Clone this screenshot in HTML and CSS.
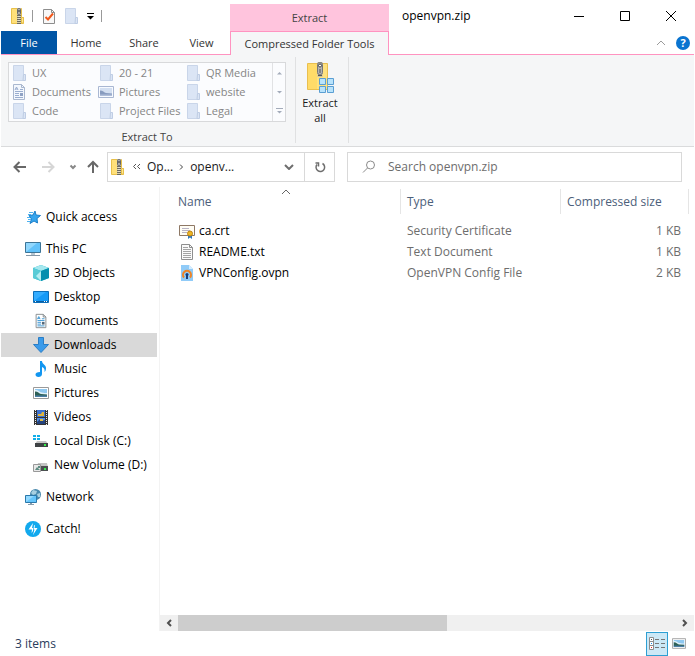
FILE: index.html
```html
<!DOCTYPE html>
<html lang="en">
<head>
    <meta charset="UTF-8">
    <meta name="viewport" content="width=device-width, initial-scale=1.0">
    <title>openvpn.zip</title>
    <link rel="stylesheet" href="styles.css">
</head>
<body>
    <!-- Shared icons -->
    <svg class="sprite" aria-hidden="true">
        <symbol id="zip" viewBox="0 0 16 18">
            <path d="M1.5 1.500h10v9h2v6h-12z" fill="#ffe07a" stroke="#e8c04a"/>
            <path d="M11.500 16v-5.500h2V16z" fill="#ffe791" stroke="#e8c04a"/>
            <path d="M7 1h4v16H7z" fill="#d5cda8"/>
            <path d="M9 8v9" stroke="#6d6a60" stroke-width="4" stroke-dasharray="1 1"/>
            <path d="M8.500 9.500h1M8.500 11.500h1M8.500 13.500h1" stroke="#eee"/>
            <rect x="7.500" y="1.500" width="3" height="6" rx="1" fill="#aaa" stroke="#65676a"/>
            <path d="M9 3v2" stroke="#333"/>
        </symbol>
        <symbol id="folder" viewBox="0 0 14 18">
            <path d="M1.500 1.500h10v15h-10z" fill="#dbe5f5" stroke="#c9d5e9"/>
            <path d="M11.500 10.500h2v6h-2.500z" fill="#dbe5f5" stroke="#bfcde4"/>
        </symbol>
        <symbol id="document" viewBox="0 0 14 18">
            <path d="M1.500 1.500h8l3 3v12h-11z" fill="#fff" stroke="#7f8589"/>
            <path d="M9.500 1.500v3h3" fill="none" stroke="#7f8589"/>
            <path d="M3 7l1.500-3L6 7M3.500 6h2M8 6.500h3M3 8.500h8M3 10.500h4M3 12.500h4M3 14.500h8" fill="none" stroke="#2f8fd0"/>
            <path d="M8 10h3v3H8z" fill="#52677a"/>
        </symbol>
        <symbol id="document-off" viewBox="0 0 14 18">
            <path d="M1.500 1.500h8l3 3v12h-11z" fill="#f3f7fd" stroke="#a9b7cf"/>
            <path d="M9.500 1.500v3h3" fill="none" stroke="#a9b7cf"/>
            <path d="M3 7l1.500-3L6 7M3.500 6h2M8 6.500h3M3 8.500h8M3 10.500h4M3 12.500h4M3 14.500h8" fill="none" stroke="#9aadcf"/>
            <path d="M8 10h3v3H8z" fill="#8fa2c4"/>
        </symbol>
        <symbol id="picture" viewBox="0 0 16 12">
            <path d="M.5.5h15v11H.5z" fill="#fff" stroke="#9a9a9a"/>
            <path d="M2 2h12v8H2z" fill="#8fc8f0"/>
            <path d="M2 3c4 0 4 2 7 2.500 2 .5 3 .5 5 .5v2H2z" fill="#dff0fa"/>
            <path d="M2 4.500c3 0 4 2 6 2.500l6 .5V9H2z" fill="#2d5f55"/>
            <path d="M2 8.500h12V10H2z" fill="#4b7ea6"/>
        </symbol>
        <symbol id="picture-off" viewBox="0 0 16 12">
            <path d="M.5.5h15v11H.5z" fill="#f7faff" stroke="#a9b7d2"/>
            <path d="M2 2h12v8H2z" fill="#d3dff1"/>
            <path d="M2 4.500c3 0 4 2 6 2.500l6 .5V9H2z" fill="#879bbf"/>
            <path d="M2 8.500h12V10H2z" fill="#aebdd9"/>
        </symbol>
    </svg>

    <div class="window">
        <header class="titlebar">
            <div class="quick-bar">
                <svg class="icon-file" aria-hidden="true"><use href="#zip"/></svg>
                <span class="divider"></span>
                <button type="button" aria-label="Properties">
                    <svg width="14" height="18" viewBox="0 0 14 18"><path d="M1.500 2.500h8l3 3v11h-11z" fill="#f8f8f8" stroke="#8d8d8d"/><path d="M9.500 2.500v3h3" fill="none" stroke="#8d8d8d"/><path d="M3.500 10l2.500 2.500 5-6" fill="none" stroke="#f0581c" stroke-width="2"/></svg>
                </button>
                <button type="button" aria-label="New folder">
                    <svg width="14" height="18"><use href="#folder"/></svg>
                </button>
                <button type="button" aria-label="Customize toolbar">
                    <svg width="9" height="8" viewBox="0 0 9 8"><path d="M1 1.500h7" stroke="#000"/><path d="M1 4h7L4.500 7.500z"/></svg>
                </button>
                <span class="divider"></span>
            </div>
            <div class="context-title">Extract</div>
            <h1>openvpn.zip</h1>
            <div class="window-buttons">
                <button type="button" aria-label="Minimize"><svg width="12" height="12" viewBox="0 0 12 12"><path d="M1 6.500h10" stroke="#000"/></svg></button>
                <button type="button" aria-label="Maximize"><svg width="12" height="12" viewBox="0 0 12 12"><path d="M1.500 1.500h9v9h-9z" fill="none" stroke="#000"/></svg></button>
                <button type="button" aria-label="Close"><svg width="12" height="12" viewBox="0 0 12 12"><path d="M1 1l10 10M11 1L1 11" stroke="#000"/></svg></button>
            </div>
        </header>

        <nav class="tabs">
            <button type="button" class="tab tab-file">File</button>
            <button type="button" class="tab">Home</button>
            <button type="button" class="tab">Share</button>
            <button type="button" class="tab tab-view">View</button>
            <button type="button" class="tab tab-active">Compressed Folder Tools</button>
            <div class="tab-tools">
                <button type="button" aria-label="Collapse ribbon"><svg width="10" height="6" viewBox="0 0 10 6"><path d="M1 5l4-4 4 4" fill="none" stroke="#9b9b9b"/></svg></button>
                <button type="button" class="help" aria-label="Help">?</button>
            </div>
        </nav>

        <section class="ribbon">
            <div class="ribbon-group">
                <div class="gallery">
                    <div class="gallery-items">
                        <button type="button" disabled><svg class="icon-file"><use href="#folder"/></svg>UX</button>
                        <button type="button" disabled><svg class="icon-file"><use href="#folder"/></svg>20 - 21</button>
                        <button type="button" disabled><svg class="icon-file"><use href="#folder"/></svg>QR Media</button>
                        <button type="button" disabled><svg class="icon-file"><use href="#document-off"/></svg>Documents</button>
                        <button type="button" disabled><svg class="icon-file"><use href="#picture-off"/></svg>Pictures</button>
                        <button type="button" disabled><svg class="icon-file"><use href="#folder"/></svg>website</button>
                        <button type="button" disabled><svg class="icon-file"><use href="#folder"/></svg>Code</button>
                        <button type="button" disabled><svg class="icon-file"><use href="#folder"/></svg>Project Files</button>
                        <button type="button" disabled><svg class="icon-file"><use href="#folder"/></svg>Legal</button>
                    </div>
                    <div class="gallery-scroll">
                        <button type="button" aria-label="Previous row" disabled><svg width="7" height="8" viewBox="0 0 7 8"><path d="M1 5.500h5L3.500 3z" fill="#a3abba"/></svg></button>
                        <button type="button" aria-label="Next row" disabled><svg width="7" height="8" viewBox="0 0 7 8"><path d="M1 3h5L3.500 5.500z" fill="#a3abba"/></svg></button>
                        <button type="button" aria-label="More" disabled><svg width="7" height="8" viewBox="0 0 7 8"><path d="M0 1.500h7" stroke="#a3abba"/><path d="M1 4h5L3.500 6.500z" fill="#a3abba"/></svg></button>
                    </div>
                </div>
                <div class="group-label">Extract To</div>
            </div>
            <div class="ribbon-group ribbon-group-small">
                <button type="button" class="extract-all">
                    <svg width="32" height="32" viewBox="0 0 32 32" aria-hidden="true">
                        <path d="M3.500 2.500h20v26h-20z" fill="#ffe27f" stroke="#e9bf4f"/>
                        <path d="M4 3h9v25H4z" fill="#ffdb68"/>
                        <path d="M13.500 1h5v15h-5z" fill="#c9c1a4"/>
                        <rect x="13.500" y="1.500" width="5" height="12" rx="2" fill="#b2b2b2" stroke="#777"/>
                        <circle cx="16" cy="4.500" r="1.500" fill="#fff" stroke="#444"/>
                        <path d="M16 8v4M14 14.500h4" stroke="#555"/>
                        <g fill="#b9e3fb" stroke="#5b9fd3"><path d="M15.500 17.500h6v6h-6zM23.500 17.500h6v6h-6zM15.500 25.500h6v6h-6zM23.500 25.500h6v6h-6z"/></g>
                    </svg>
                    <span>Extract<br>all</span>
                </button>
            </div>
        </section>

        <div class="navbar">
            <div class="history">
                <button type="button" aria-label="Back"><svg width="14" height="12" viewBox="0 0 14 12"><path d="M13 6H2M6.500 1L1.500 6l5 5" fill="none" stroke="#686868" stroke-width="2"/></svg></button>
                <button type="button" aria-label="Forward" disabled><svg width="14" height="12" viewBox="0 0 14 12"><path d="M1 6h11M7.500 1l5 5-5 5" fill="none" stroke="#d6d6d6" stroke-width="2"/></svg></button>
                <button type="button" aria-label="Recent locations"><svg width="8" height="6" viewBox="0 0 8 6"><path d="M1.500 1.500L4 4l2.500-2.500" fill="none" stroke="#888" stroke-width="2"/></svg></button>
                <button type="button" aria-label="Up"><svg width="12" height="14" viewBox="0 0 12 14"><path d="M6 13V2M1 7l5-5 5 5" fill="none" stroke="#686868" stroke-width="2"/></svg></button>
            </div>
            <div class="address">
                <svg class="icon-file" aria-hidden="true"><use href="#zip"/></svg>
                <svg width="9" height="8" viewBox="0 0 9 8"><path d="M4 1L1.500 3.500 4 6M8 1L5.500 3.500 8 6" fill="none" stroke="#555"/></svg>
                <button type="button">Op...</button>
                <svg width="5" height="8" viewBox="0 0 5 8"><path d="M1 1.500L3.500 4 1 6.500" fill="none" stroke="#444"/></svg>
                <button type="button">openv...</button>
                <button type="button" class="address-drop" aria-label="Previous locations"><svg width="10" height="6" viewBox="0 0 10 6"><path d="M1 1l4 4 4-4" fill="none" stroke="#6e6e6e" stroke-width="2"/></svg></button>
                <button type="button" class="refresh" aria-label="Refresh"><svg width="12" height="12" viewBox="0 0 12 12"><path d="M8.500 2.500A4.300 4.300 0 1 1 3 3.500M1.500 2h3v3.500" fill="none" stroke="#6e6e6e" stroke-width="1.500"/></svg></button>
            </div>
            <label class="search">
                <svg width="14" height="14" viewBox="0 0 14 14" aria-hidden="true"><circle cx="8.500" cy="5" r="4" fill="none" stroke="#8b8b8b"/><path d="M5.500 8L1 12.500" stroke="#8b8b8b"/></svg>
                <input type="search" placeholder="Search openvpn.zip" aria-label="Search openvpn.zip">
            </label>
        </div>

        <div class="content">
            <nav class="sidebar">
                <a href="#quick">
                    <svg class="icon" viewBox="0 0 16 16"><path d="M10 2l1 4 4.500.5-3.500 3 .5 4.500-3.500-2-4 2.500 1.500-4.500L4 6.500l4-.5z" fill="#35a5ee" stroke="#1b7fc9"/><path d="M4 3.500h4M3 5.500h3M2 8.500h3M3 10.500h3M2 12.500h3" stroke="#4db2f0"/></svg>Quick access
                </a>
                <div class="sidebar-group">
                    <a href="#pc">
                        <svg class="icon" viewBox="0 0 16 16"><path d="M.5 1.500h15v10H.5z" fill="#62c2fa" stroke="#3c7496"/><path d="M1 11V2h11z" fill="#91d7fd"/><path d="M6 12h4v2H6z" fill="#b8c7d2"/><path d="M1 14.500h14" stroke="#8597a6"/></svg>This PC
                    </a>
                    <a href="#objects" class="child">
                        <svg class="icon" viewBox="0 0 16 16"><path d="M0 3l8-3 8 3v10l-8 3-8-3z" fill="#18b3c9"/><path d="M0 3l8-3 8 3-8 3z" fill="#a6e8ef"/><path d="M0 3l8 3v10l-8-3z" fill="#58cbd6"/><path d="M8 6l8-3v10l-8 3z" fill="#078fae"/><path d="M8 6v10L3 11z" fill="#b5eef1"/></svg>3D Objects
                    </a>
                    <a href="#desktop" class="child">
                        <svg class="icon" viewBox="0 0 16 16"><path d="M.5 2.500h15v11H.5z" fill="#169af7" stroke="#0c6fba"/><path d="M1 12V3h12z" fill="#35adff"/><path d="M1 12.500h14" stroke="#0b5d9f"/><path d="M2 12.500h1M11 12.500h1M13 12.500h1" stroke="#fff"/></svg>Desktop
                    </a>
                    <a href="#documents" class="child"><svg class="icon"><use href="#document"/></svg>Documents</a>
                    <a href="#downloads" class="child selected">
                        <svg class="icon" viewBox="0 0 16 16"><path d="M5.500.5h5v7h5L8 15.500.5 7.500h5z" fill="#3b9bea" stroke="#2b7dc5"/></svg>Downloads
                    </a>
                    <a href="#music" class="child">
                        <svg class="icon" viewBox="0 0 16 16"><path d="M7 0h2c0 3 4 4 4 7 0 2-.5 3-1.500 4 .5-3-.5-4-2.500-5v7c0 2-1.500 3-3.500 3S2.500 15 2.500 13.500 4 11 7 11z" fill="#1296f0"/></svg>Music
                    </a>
                    <a href="#pictures" class="child"><svg class="icon"><use href="#picture"/></svg>Pictures</a>
                    <a href="#videos" class="child">
                        <svg class="icon" viewBox="0 0 16 16"><path d="M1 1h14v15H1z" fill="#343434"/><path d="M4 1h8v7H4z" fill="#3d72cf"/><path d="M4 9h8v6H4z" fill="#4e8ce5"/><path d="M2.500 1v15M13.500 1v15" stroke="#eee" stroke-dasharray="1 1"/><path d="M5 5h3l1-2h2v4H5z" fill="#dfb43c"/><path d="M4 13l3-3 2 2 3-1v4H4z" fill="#24437d"/><path d="M7 10h3v2H7z" fill="#e2bd44"/></svg>Videos
                    </a>
                    <a href="#c" class="child">
                        <svg class="icon" viewBox="0 0 16 16"><path d="M0 2h3v2H0zM4 2h3v2H4zM0 5h3v2H0zM4 5h3v2H4z" fill="#11aee9"/><path d="M4 8h9l2 3H2z" fill="#c4c4c4"/><path d="M2 10h13v4H2z" fill="#3f4345"/><path d="M11 12h2" stroke="#37ef4d" stroke-width="2"/></svg>Local Disk (C:)
                    </a>
                    <a href="#d" class="child">
                        <svg class="icon" viewBox="0 0 16 16"><path d="M5 6h9l1 4H4z" fill="#c4c4c4"/><path d="M6 9h9v5H6z" fill="#4b4f50"/><path d="M11 12h2" stroke="#37ef4d" stroke-width="2"/><path d="M.5 7.500h7v7h-7z" fill="#e8e8e8" stroke="#999"/><path d="M2 13l2-3 3 3zM5 9h2v2H5z" fill="#5f8d83"/></svg>New Volume (D:)
                    </a>
                </div>
                <a href="#network">
                    <svg class="icon" viewBox="0 0 16 16"><circle cx="10.500" cy="5.500" r="5.500" fill="#4989ad"/><path d="M8 1l4 1-1 3-3 1-2-2zM12 5l3-1v4h-2z" fill="#a7cfe0"/><path d="M.5 6.500h11v7H.5z" fill="#65c5fb" stroke="#2a78aa"/><path d="M1 13V7h8z" fill="#93d9ff"/><path d="M5 14h2v1h2v1H3v-1h2z" fill="#879cac"/></svg>Network
                </a>
                <a href="#catch">
                    <svg class="icon" viewBox="0 0 16 16"><circle cx="8" cy="8" r="8" fill="#12a9ed"/><path d="M8 2L3.500 8.500h3.500L6.500 12 8 10V7H7zM9 4.500L8.500 8.500H9.500L8 14l4.500-7H9.500l.5-3z" fill="#fff"/></svg>Catch!
                </a>
            </nav>

            <main class="files">
                <table>
                    <colgroup>
                        <col>
                        <col class="col-type">
                        <col class="col-size">
                    </colgroup>
                    <thead>
                        <tr>
                            <th class="sorted"><button type="button">Name</button><svg class="sort-mark" viewBox="0 0 10 6"><path d="M1 5l4-4 4 4" fill="none" stroke="#666"/></svg></th>
                            <th><button type="button">Type</button></th>
                            <th><button type="button">Compressed size</button></th>
                        </tr>
                    </thead>
                    <tbody>
                        <tr>
                            <td><span class="file-name"><svg class="icon" viewBox="0 0 16 16"><path d="M.5 2.500h15v10H.5z" fill="#fffdf5" stroke="#8e7865"/><path d="M3 5.500h7M3 7.500h8M3 9.500h5" stroke="#b9b4c5"/><path d="M9 11h4v5l-2-1.500L9 16z" fill="#3179be"/><circle cx="11" cy="10.500" r="2.500" fill="#efb622" stroke="#bd8411"/></svg>ca.crt</span></td>
                            <td>Security Certificate</td>
                            <td>1 KB</td>
                        </tr>
                        <tr>
                            <td><span class="file-name"><svg class="icon" viewBox="0 0 16 16"><path d="M2.500.5h8l3 3v12h-11z" fill="#fafafa" stroke="#8e8e8e"/><path d="M10.500.5v3h3" fill="none" stroke="#8e8e8e"/><path d="M4 3.500h5M4 5.500h8M4 7.500h8M4 9.500h8M4 11.500h8M4 13.500h8" stroke="#a3a3a3"/></svg>README.txt</span></td>
                            <td>Text Document</td>
                            <td>1 KB</td>
                        </tr>
                        <tr>
                            <td><span class="file-name"><svg class="icon" viewBox="0 0 16 16"><path d="M2 0h8l4 4v12H2z" fill="#90cbf8"/><path d="M10 0v4h4z" fill="#d6edff"/><path d="M5 12.500a4 4 0 1 1 6 0" fill="none" stroke="#ef8425" stroke-width="2"/><circle cx="8" cy="9.500" r="1.500" fill="#193c77"/><path d="M7 10h2v4H7z" fill="#193c77"/></svg>VPNConfig.ovpn</span></td>
                            <td>OpenVPN Config File</td>
                            <td>2 KB</td>
                        </tr>
                    </tbody>
                </table>
                <div class="scrollbar">
                    <button type="button" aria-label="Scroll left"><svg width="6" height="8" viewBox="0 0 6 8"><path d="M5 1L2 4l3 3" fill="none" stroke="#505050" stroke-width="2"/></svg></button>
                    <div class="scroll-track"><div class="scroll-thumb"></div></div>
                    <button type="button" aria-label="Scroll right"><svg width="6" height="8" viewBox="0 0 6 8"><path d="M1 1l3 3-3 3" fill="none" stroke="#505050" stroke-width="2"/></svg></button>
                </div>
            </main>
        </div>

        <footer class="statusbar">
            <span>3 items</span>
            <div class="view-buttons">
                <button type="button" class="active" aria-label="Details view"><svg width="16" height="14" viewBox="0 0 16 14"><path d="M.5.500h4v12h-4zM.5 4.500h4M.5 8.500h4" fill="#fff" stroke="#8c8c8c"/><path d="M2 2.500h1" stroke="#555"/><path d="M2 6.500h1" stroke="#168cf0"/><path d="M2 10.500h1" stroke="#e32626"/><path d="M6 2.500h4M12 2.500h4M6 6.500h4M12 6.500h4M6 10.500h4M12 10.500h4" stroke="#777"/></svg></button>
                <button type="button" aria-label="Large icons view"><svg width="14" height="11"><use href="#picture"/></svg></button>
            </div>
        </footer>
    </div>
</body>
</html>
```

FILE: styles.css
```css
* {
    box-sizing: border-box;
}
body {
    margin: 0;
    font-family: "Open Sans", "Noto Sans", sans-serif;
    font-size: 12px;
    line-height: 16px;
    color: #1a1a1a;
    background-color: #fff;
}
button {
    display: flex;
    align-items: center;
    justify-content: center;
    padding: 0;
    border: none;
    background: none;
    font: inherit;
    color: inherit;
}
svg {
    display: block;
    flex-shrink: 0;
}
.sprite {
    position: absolute;
    width: 0;
    height: 0;
}
.icon {
    width: 16px;
    height: 16px;
}
.icon-file {
    width: 16px;
    height: 18px;
}
.window {
    display: flex;
    flex-direction: column;
    min-height: 100vh;
    padding: 0 1px;
}

/* Title bar */
.titlebar {
    display: flex;
    height: 31px;
}
.quick-bar {
    display: flex;
    align-items: center;
    gap: 8px;
    width: 229px;
    padding-left: 9px;
}
.divider {
    width: 1px;
    height: 12px;
    margin: 0 1px 0 -2px;
    background-color: #999;
}
.context-title {
    width: 159px;
    margin-top: 4px;
    padding-top: 6px;
    background-color: #ffc4dd;
    font-size: 11px;
    text-align: center;
    color: #444;
}
h1 {
    flex: 1;
    margin: 0;
    padding: 8px 13px;
    font-size: 12px;
    font-weight: normal;
    color: #000;
}
.window-buttons {
    display: flex;
}
.window-buttons button {
    width: 46px;
}

/* Tabs */
.tabs {
    display: flex;
    height: 24px;
    border-bottom: 1px solid #ff93c0;
}
.tab {
    width: 58px;
    font-size: 11px;
    color: #333;
}
.tab-file {
    width: 56px;
    height: 23px;
    background-color: #0055a5;
    color: #fff;
}
.tab-view {
    width: 57px;
}
.tab-active {
    width: 159px;
    height: 24px;
    border: 1px solid #ff93c0;
    border-bottom: none;
    background-color: #f5f6f7;
}
.tab-tools {
    display: flex;
    flex: 1;
    align-items: center;
    justify-content: flex-end;
    gap: 10px;
    padding-right: 4px;
}
.help {
    width: 14px;
    height: 14px;
    border-radius: 50%;
    background-color: #0a74d0;
    font-size: 11px;
    font-weight: bold;
    color: #fff;
}

/* Ribbon */
.ribbon {
    display: flex;
    height: 92px;
    padding-top: 2px;
    border-bottom: 1px solid #dadbdc;
    background-color: #f5f6f7;
    font-size: 11px;
}
.ribbon-group {
    width: 295px;
    height: 86px;
    padding: 5px 9px 0 7px;
    border-right: 1px solid #e0e1e2;
}
.ribbon-group-small {
    width: 53px;
    padding: 4px 4px 0 0;
}
.gallery {
    display: flex;
    height: 60px;
    border: 1px solid #d8d9db;
    background-color: #fbfcfe;
}
.gallery-items {
    display: grid;
    flex: 1;
    grid-template-columns: repeat(3, 87px);
    grid-template-rows: repeat(3, 1fr);
    padding-left: 2px;
}
.gallery-items button {
    justify-content: flex-start;
    gap: 5px;
    min-height: 0;
    white-space: nowrap;
    color: #858585;
}
.gallery-scroll {
    display: grid;
    width: 14px;
    border-left: 1px solid #e1e2e4;
}
.group-label {
    margin-top: 7px;
    text-align: center;
    color: #444;
}
.extract-all {
    flex-direction: column;
    width: 100%;
    line-height: 15px;
}
.extract-all span {
    margin-top: 2px;
}

/* Navigation bar */
.navbar {
    display: flex;
    gap: 12px;
    padding: 5px 12px 5px 12px;
}
.history {
    display: flex;
    align-items: center;
    gap: 14px;
    width: 94px;
    margin-right: -12px;
}
.history button:nth-child(3) {
    margin-right: -4px;
}
.address {
    display: flex;
    align-items: center;
    gap: 6px;
    width: 228px;
    height: 30px;
    padding-left: 2px;
    border: 1px solid #d9d9d9;
}
.address-drop {
    width: 30px;
    margin-left: auto;
}
.refresh {
    width: 30px;
    height: 28px;
    margin-left: -6px;
    border-left: 1px solid #d9d9d9;
}
.search {
    display: flex;
    flex: 1;
    align-items: center;
    gap: 12px;
    height: 30px;
    padding: 0 14px;
    border: 1px solid #d9d9d9;
}
.search input {
    flex: 1;
    min-width: 0;
    padding: 0;
    border: none;
    outline: none;
    font: inherit;
}
.search input::placeholder {
    color: #6d6d6d;
}

/* Content */
.content {
    display: flex;
    flex: 1;
}
.sidebar {
    display: flex;
    flex-direction: column;
    gap: 8px;
    width: 159px;
    padding: 18px 2px 0 0;
    border-right: 1px solid #f3f3f3;
}
.sidebar a {
    display: flex;
    align-items: center;
    gap: 5px;
    height: 24px;
    padding-left: 24px;
    color: #000;
    text-decoration: none;
}
.sidebar .child {
    padding-left: 32px;
}
.sidebar .selected {
    background-color: #d9d9d9;
}
.files {
    display: flex;
    flex: 1;
    flex-direction: column;
    min-width: 0;
    padding-top: 2px;
}
table {
    width: calc(100% - 5px);
    border-collapse: collapse;
    table-layout: fixed;
}
.col-type {
    width: 160px;
}
.col-size {
    width: 128px;
}
th {
    position: relative;
    padding: 0 0 6px;
    font-weight: normal;
}
th button {
    justify-content: flex-start;
    width: 100%;
    height: 25px;
    padding-left: 6px;
    border-right: 1px solid #e5e5e5;
    color: #4c607a;
}
.sorted button {
    padding-left: 18px;
}
.sort-mark {
    position: absolute;
    top: 0;
    left: 50%;
    width: 10px;
    height: 6px;
}
td {
    height: 21px;
    padding: 0 8px 0 6px;
    color: #6d6d6d;
}
td:first-child {
    padding-left: 19px;
    color: #000;
}
td:last-child {
    text-align: right;
}
.file-name {
    display: flex;
    align-items: center;
    gap: 4px;
}
.scrollbar {
    display: flex;
    height: 16px;
    margin-top: auto;
    background-color: #f0f0f0;
}
.scrollbar button {
    width: 18px;
}
.scroll-track {
    flex: 1;
}
.scroll-thumb {
    width: 54%;
    height: 100%;
    background-color: #cdcdcd;
}

/* Status bar */
.statusbar {
    display: flex;
    align-items: center;
    justify-content: space-between;
    height: 25px;
    padding: 0 4px 0 14px;
    color: #2a3c5c;
}
.view-buttons {
    display: flex;
}
.view-buttons button {
    width: 22px;
    height: 24px;
    border: 1px solid transparent;
}
.view-buttons .active {
    border-color: #2e9fd3;
    background-color: #cce8f6;
}
```
